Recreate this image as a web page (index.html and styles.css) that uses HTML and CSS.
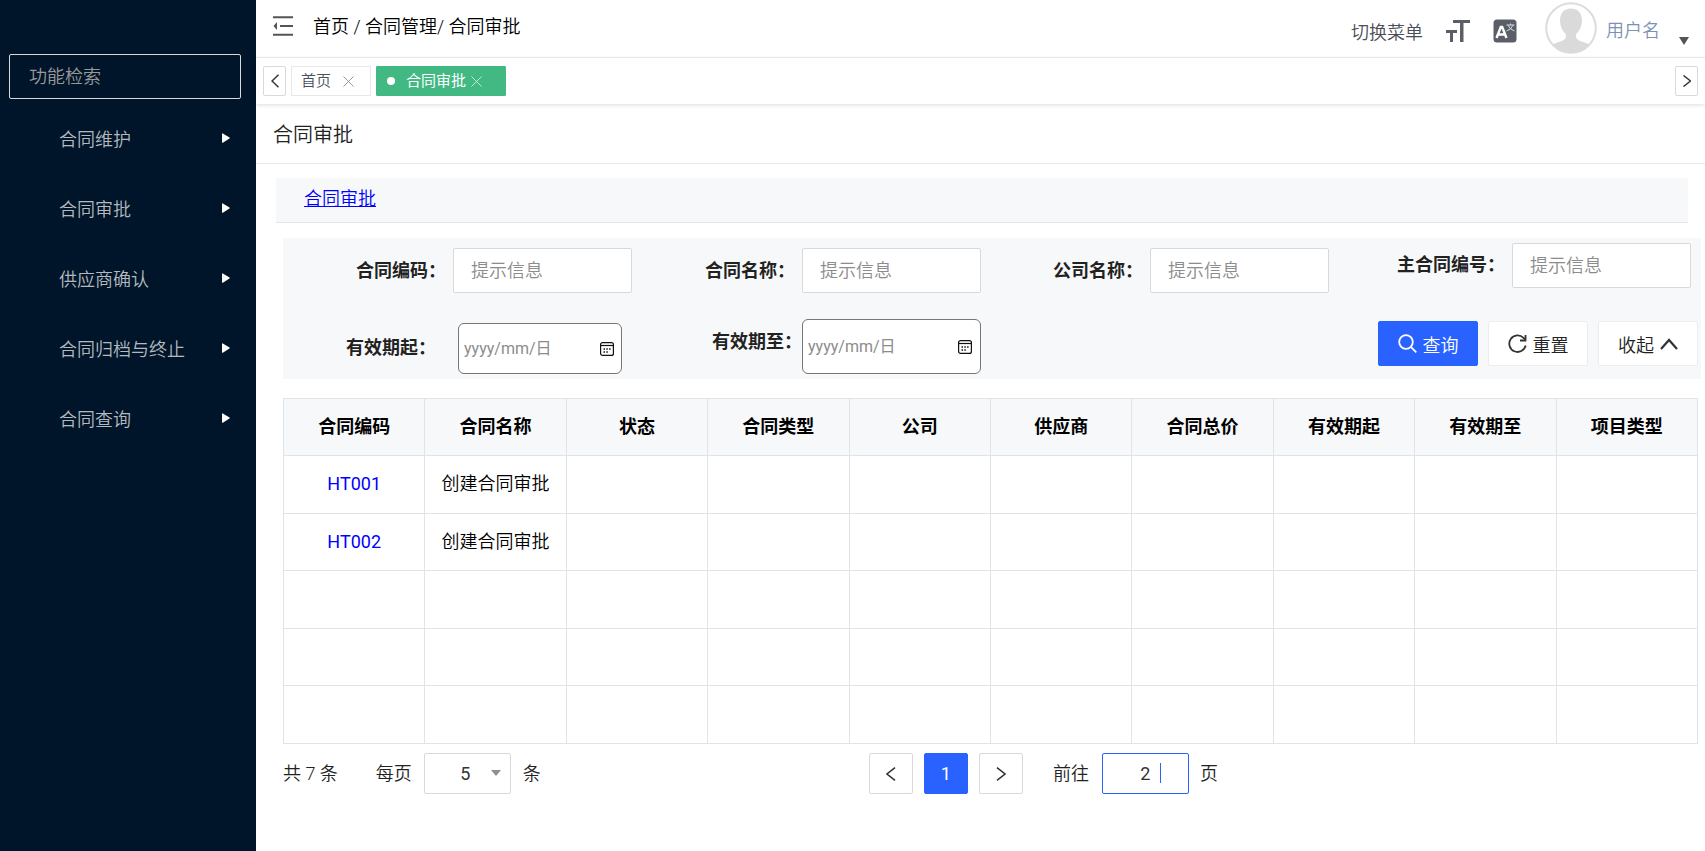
FILE: index.html
```html
<!DOCTYPE html>
<html lang="zh-CN">
<head>
<meta charset="utf-8">
<title>合同审批</title>
<link rel="stylesheet" href="styles.css">
</head>
<body>
<div class="app">
  <aside class="sidebar">
    <input class="menu-search" type="text" placeholder="功能检索" aria-label="功能检索">
    <nav class="menu">
      <button type="button" class="menu-item">合同维护<svg class="menu-arrow" viewBox="0 0 8 10"><path d="M0 0.8Q0 0 0.8 0.4L7.5 4.4Q8 5 7.5 5.6L0.8 9.7Q0 10 0 9.2z"/></svg></button>
      <button type="button" class="menu-item">合同审批<svg class="menu-arrow" viewBox="0 0 8 10"><path d="M0 0.8Q0 0 0.8 0.4L7.5 4.4Q8 5 7.5 5.6L0.8 9.7Q0 10 0 9.2z"/></svg></button>
      <button type="button" class="menu-item">供应商确认<svg class="menu-arrow" viewBox="0 0 8 10"><path d="M0 0.8Q0 0 0.8 0.4L7.5 4.4Q8 5 7.5 5.6L0.8 9.7Q0 10 0 9.2z"/></svg></button>
      <button type="button" class="menu-item">合同归档与终止<svg class="menu-arrow" viewBox="0 0 8 10"><path d="M0 0.8Q0 0 0.8 0.4L7.5 4.4Q8 5 7.5 5.6L0.8 9.7Q0 10 0 9.2z"/></svg></button>
      <button type="button" class="menu-item">合同查询<svg class="menu-arrow" viewBox="0 0 8 10"><path d="M0 0.8Q0 0 0.8 0.4L7.5 4.4Q8 5 7.5 5.6L0.8 9.7Q0 10 0 9.2z"/></svg></button>
    </nav>
  </aside>

  <div class="main">
    <header class="topbar">
      <button type="button" class="icon-button" aria-label="收起菜单">
        <svg width="20" height="20" viewBox="0 0 20 20"><path d="M0 1.2h20M7 10h13M0 18.8h20" stroke="#555" stroke-width="2"/><path d="M4 6v8L0.500 10z" fill="#555"/></svg>
      </button>
      <div class="breadcrumb">首页 / 合同管理/ 合同审批</div>
      <div class="tools">
        <button type="button" class="switch-menu">切换菜单</button>
        <button type="button" class="icon-button" aria-label="字体大小">
          <svg width="24" height="24" viewBox="0 0 24 24" fill="#5a5e66"><path d="M7 1h17v3h-6.500v19h-3.500v-19h-7zM0 11h11v3h-4v9h-3v-9h-4z"/></svg>
        </button>
        <button type="button" class="icon-button" aria-label="语言">
          <svg width="24" height="24" viewBox="0 0 24 24"><rect x="0.500" y="0.500" width="23" height="23" rx="3.500" fill="#5a5e66"/><path d="M3.500 19L7.800 8h1.400l4.300 11M5 15.500h7" fill="none" stroke="#fff" stroke-width="2.400"/><path d="M13.500 6h8M17.500 4.500v1.500M15 6q1.500 4.500 6.500 6M20 6q-1.500 4.500-6.500 6" fill="none" stroke="#d8dade" stroke-width="1"/></svg>
        </button>
        <div class="user">
          <svg width="52" height="52" viewBox="0 0 52 52"><defs><clipPath id="face"><circle cx="26" cy="26" r="25"/></clipPath></defs><circle cx="26" cy="26" r="24.800" fill="#fff" stroke="#dcdcdc" stroke-width="2"/><path clip-path="url(#face)" fill="#dadada" d="M26 6.500C18.500 6.500 15 12 15 18.500C15 24 17.500 29 20.500 31.500C21.800 35 20.500 37.500 17.500 38.700C12 40.500 8 41.500 6 44L14 52H38L46 44C44 41.500 40 40.500 34.500 38.700C31.500 37.500 30.200 35 31.500 31.500C34.500 29 37 24 37 18.500C37 12 33.500 6.500 26 6.500z"/></svg>
          <span class="user-name">用户名</span>
          <svg class="user-caret" width="10" height="8" viewBox="0 0 10 8"><path d="M0 0h10L5 8z" fill="#555"/></svg>
        </div>
      </div>
    </header>

    <div class="tabs">
      <button type="button" class="tab-scroll" aria-label="向左"><svg width="8" height="14" viewBox="0 0 8 14"><path d="M7.500 0.700L1 7l6.500 6.300"/></svg></button>
      <div class="tab"><span>首页</span><button type="button" class="tab-close" aria-label="关闭首页"><svg width="11" height="11" viewBox="0 0 11 11"><path d="M0.500 0.500l10 10M10.500 0.500l-10 10"/></svg></button></div>
      <div class="tab tab-active"><i class="tab-dot"></i><span>合同审批</span><button type="button" class="tab-close" aria-label="关闭合同审批"><svg width="11" height="11" viewBox="0 0 11 11"><path d="M0.500 0.500l10 10M10.500 0.500l-10 10"/></svg></button></div>
      <button type="button" class="tab-scroll tab-scroll-right" aria-label="向右"><svg width="8" height="12" viewBox="0 0 8 12"><path d="M0.500 0.500L7.500 6l-7 5.500"/></svg></button>
    </div>

    <h1 class="page-title">合同审批</h1>
    <div class="link-bar"><a href="#">合同审批</a></div>

    <form class="filters">
      <div class="field"><label for="code">合同编码：</label><input class="text-input" id="code" type="text" placeholder="提示信息"></div>
      <div class="field"><label for="name">合同名称：</label><input class="text-input" id="name" type="text" placeholder="提示信息"></div>
      <div class="field"><label for="company">公司名称：</label><input class="text-input" id="company" type="text" placeholder="提示信息"></div>
      <div class="field field-main"><label for="master">主合同编号：</label><input class="text-input" id="master" type="text" placeholder="提示信息"></div>
      <div class="field field-from"><label for="from">有效期起：</label>
        <div class="date-box"><input id="from" type="text" placeholder="yyyy/mm/日"><svg width="14" height="14" viewBox="0 0 14 14"><rect x="0.600" y="0.600" width="12.800" height="12.800" rx="2"/><path d="M0.600 3.500h12.800"/><path d="M3.500 7h1.500M6.300 7h1.500M9.100 7h1.500M3.500 10h1.500M6.300 10h1.500" stroke-width="1.500"/></svg></div></div>
      <div class="field field-to"><label for="to">有效期至：</label>
        <div class="date-box"><input id="to" type="text" placeholder="yyyy/mm/日"><svg width="14" height="14" viewBox="0 0 14 14"><rect x="0.600" y="0.600" width="12.800" height="12.800" rx="2"/><path d="M0.600 3.500h12.800"/><path d="M3.500 7h1.500M6.300 7h1.500M9.100 7h1.500M3.500 10h1.500M6.300 10h1.500" stroke-width="1.500"/></svg></div></div>
      <div class="actions">
        <button type="button" class="btn btn-primary"><svg width="19" height="19" viewBox="0 0 19 19"><circle cx="8" cy="8" r="6.800"/><path d="M12.800 12.800l5.500 5.500"/></svg>查询</button>
        <button type="button" class="btn"><svg width="19" height="19" viewBox="0 0 19 19"><path d="M17.700 11.500A8.300 8.300 0 1 1 15.500 3.800L17 5.500"/><path d="M17.500 1v5.500h-5.500" /></svg>重置</button>
        <button type="button" class="btn btn-collapse">收起<svg width="18" height="12" viewBox="0 0 18 12"><path d="M1 11L9 2l8 9"/></svg></button>
      </div>
    </form>

    <table class="grid">
      <thead><tr><th>合同编码</th><th>合同名称</th><th>状态</th><th>合同类型</th><th>公司</th><th>供应商</th><th>合同总价</th><th>有效期起</th><th>有效期至</th><th>项目类型</th></tr></thead>
      <tbody>
        <tr><td><a href="#">HT001</a></td><td>创建合同审批</td><td></td><td></td><td></td><td></td><td></td><td></td><td></td><td></td></tr>
        <tr><td><a href="#">HT002</a></td><td>创建合同审批</td><td></td><td></td><td></td><td></td><td></td><td></td><td></td><td></td></tr>
        <tr><td></td><td></td><td></td><td></td><td></td><td></td><td></td><td></td><td></td><td></td></tr>
        <tr><td></td><td></td><td></td><td></td><td></td><td></td><td></td><td></td><td></td><td></td></tr>
        <tr><td></td><td></td><td></td><td></td><td></td><td></td><td></td><td></td><td></td><td></td></tr>
      </tbody>
    </table>

    <footer class="pager">
      <div class="pager-size">
        <span class="total">共 7 条</span>
        <label for="size">每页</label>
        <div class="select-box"><select id="size"><option>5</option><option>10</option></select><svg class="select-arrow" width="10" height="6" viewBox="0 0 10 6"><path d="M0 0h10L5 6z" fill="#8c8f96"/></svg></div>
        <span>条</span>
      </div>
      <div class="pager-nav">
        <button type="button" class="page" aria-label="上一页"><svg width="10" height="14" viewBox="0 0 10 14"><path d="M9 0.700L1 7l8 6.300"/></svg></button>
        <button type="button" class="page page-current">1</button>
        <button type="button" class="page" aria-label="下一页"><svg width="10" height="14" viewBox="0 0 10 14"><path d="M1 0.700L9 7l-8 6.300"/></svg></button>
        <label class="goto" for="goto">前往</label>
        <div class="goto-box"><input id="goto" type="text" value="2"><i class="caret"></i></div>
        <span>页</span>
      </div>
    </footer>
  </div>
</div>
</body>
</html>
```
FILE: styles.css
```css
* { box-sizing: border-box; }
body, button, input, select {
  font-family: Roboto, "Noto Sans CJK SC", sans-serif;
  font-size: 18px;
  font-weight: 350;
}
body { margin: 0; color: #222; background: #fff; line-height: 26px; }
button { margin: 0; padding: 0; border: 0; background: none; color: inherit; cursor: pointer; }
input { min-width: 0; outline: 0; }
svg { display: block; flex: none; }
.app { display: flex; min-height: 100vh; }

.sidebar { flex: none; width: 256px; padding: 54px 0 0; background: #001529; }
.menu-search {
  display: block; width: 232px; height: 45px; margin: 0 0 4px 9px; padding: 0 19px;
  border: 1px solid #d9d9d9; border-radius: 2px; background: transparent; color: #fff;
}
.menu-search::placeholder { color: #999; opacity: 1; }
.menu-item {
  display: flex; align-items: center; justify-content: space-between;
  width: 100%; height: 70px; padding: 0 26px 0 59px; color: #b3b9bf;
}
.menu-arrow { width: 8px; height: 10px; fill: #fff; }

.main { flex: 1; min-width: 0; }
.topbar { display: flex; align-items: center; height: 58px; padding: 0 16px 0 17px; border-bottom: 1px solid #f0f0f0; }
.breadcrumb { margin-left: 20px; padding-bottom: 3px; color: #000; }
.topbar > .icon-button { padding-bottom: 5px; }
.tools { display: flex; align-items: center; margin-left: auto; padding-top: 4px; color: #5a5e66; }
.tools .icon-button { margin-left: 23px; }
.switch-menu { height: 26px; color: #4a4e56; }
.user { display: flex; align-items: center; gap: 9px; margin-left: 28px; color: #7d92b3; }
.user > svg:first-child { margin-top: -6px; }
.user-caret { margin: 20px 0 0 10px; }

.tabs {
  display: flex; align-items: center; gap: 5px; height: 46px; padding: 0 7px;
  box-shadow: 0 1px 4px rgba(0, 0, 0, .14); font-size: 15px; margin-bottom: 1px;
}
.tab-scroll {
  display: flex; align-items: center; justify-content: center; width: 23px; height: 30px;
  border: 1px solid #d9d9d9; border-radius: 2px;
}
.tab-scroll svg { fill: none; stroke: #333; stroke-width: 1.500; }
.tab-scroll-right { margin-left: auto; }
.tab { display: flex; align-items: center; width: 80px; height: 30px; padding-left: 9px; border: 1px solid #e8e8e8; color: #495060; }
.tab-close { margin-left: 12px; }
.tab-close svg { fill: none; stroke: #999; stroke-width: 1; }
.tab-active { width: 130px; padding-left: 10px; border-color: #42b983; border-radius: 1px; background: #42b983; color: #fff; font-weight: 400; }
.tab-active .tab-close { margin-left: 5px; }
.tab-active .tab-close svg { stroke: #c5e9d9; }
.tab-dot { width: 8px; height: 8px; margin-right: 11px; border-radius: 50%; background: #fff; }

.page-title { margin: 0; padding: 16px 17px 13px; border-bottom: 1px solid #e8e8e8; font-size: 20px; font-weight: 350; line-height: 29px; }
.link-bar { height: 45px; margin: 14px 17px 15px 20px; padding: 8px 28px; border-bottom: 1px solid #e3e5e8; background: #f7f8fa; }
a { color: #00f; }

.filters {
  display: grid; grid-template-columns: 349fr 349fr 348fr 369fr; grid-template-rows: 55px 55px; row-gap: 21px;
  margin: 0 4px 19px 27px; padding: 5px 3px 5px 0; background: #f7f8fa;
}
.field { display: flex; align-items: center; justify-content: flex-end; gap: 7px; color: #222; }
.field label { font-weight: 700; white-space: nowrap; }
.field-main { align-items: flex-start; padding-right: 7px; }
.field-main label { line-height: 44px; }
.text-input {
  width: 179px; height: 45px; padding: 0 17px; border: 1px solid #d9d9d9; border-radius: 2px; background: #fff;
}
.text-input::placeholder, .date-box input::placeholder { color: #8c8c8c; opacity: 1; }
.date-box {
  display: flex; align-items: center; width: 179px; height: 55px; padding: 0 8px 0 5px;
  border: 1px solid #767676; border-radius: 6px; background: #fff;
}
.date-box input { flex: 1; height: 40px; padding: 0; border: 0; background: none; font-size: 16px; font-weight: 400; }
.date-box svg { fill: none; stroke: #111; stroke-width: 1.200; }
.field-from { gap: 22px; align-items: flex-end; padding-right: 10px; }
.field-from label { line-height: 53px; }
.field-from .date-box { width: 164px; height: 51px; padding-right: 7px; }
.field-to { gap: 0; align-items: flex-start; }
.field-to label { line-height: 46px; }
.actions { display: flex; grid-column: 3 / 5; justify-content: flex-end; gap: 10px; padding-top: 2px; }
.btn {
  display: flex; align-items: center; justify-content: center; gap: 6px; width: 100px; height: 45px;
  border: 1px solid #ebedf0; border-radius: 2px; background: #fff;
}
.btn svg { fill: none; stroke: #333; stroke-width: 1.800; }
.btn-primary { border-color: #2962ff; background: #2962ff; color: #fff; }
.btn-primary svg { stroke: #fff; }
.btn-collapse svg { stroke-width: 2.200; }

.grid { width: calc(100% - 34px); height: 346px; margin-left: 27px; border-collapse: collapse; table-layout: fixed; color: #000; }
.grid th, .grid td { height: 57px; padding: 0; border: 1px solid #dde4ea; text-align: center; vertical-align: middle; }
.grid th { background: #f7f8fa; font-weight: 700; }
.grid a { font-weight: 400; text-decoration: none; }

.pager { display: flex; align-items: center; padding: 9px 27px; }
.pager-size, .pager-nav { display: flex; align-items: center; }
.pager-size { flex: 0 0 42%; }
.total { margin-right: 38px; }
.select-box { position: relative; margin: 0 12px; }
.select-box select {
  display: block; width: 87px; height: 41px; padding: 0 34px 0 30px; border: 1px solid #d9d9d9; border-radius: 2px;
  background: #fff; color: #333; appearance: none; text-align-last: center; font-weight: 400;
}
.select-arrow { position: absolute; right: 10px; top: 17px; pointer-events: none; }
.pager-nav { gap: 11px; }
.page { display: flex; align-items: center; justify-content: center; width: 44px; height: 41px; border: 1px solid #d9d9d9; border-radius: 2px; font-weight: 400; }
.page svg { fill: none; stroke: #333; stroke-width: 1.500; }
.page-current { border-color: #2962ff; background: #2962ff; color: #fff; }
.goto { margin: 0 2px 0 19px; }
.goto-box { position: relative; }
.goto-box input { display: block; width: 87px; height: 41px; padding: 0; border: 1px solid #2962ff; border-radius: 2px; color: #333; text-align: center; font-weight: 400; }
.caret { position: absolute; left: 58px; top: 10px; width: 1px; height: 20px; background: #2962ff; }
```
